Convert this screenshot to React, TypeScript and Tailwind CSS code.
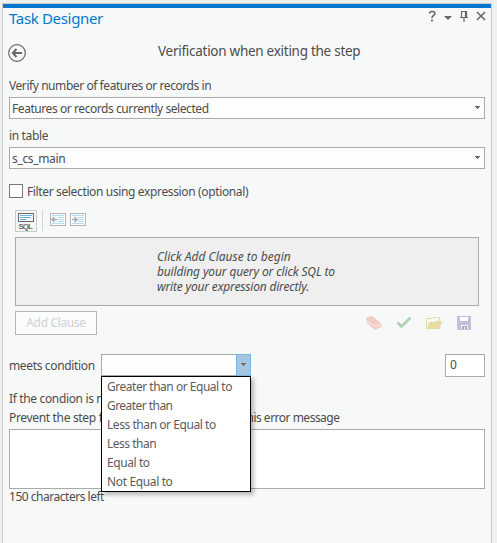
import type { ReactNode } from "react";

const conditions = [
  { label: "Greater than or Equal to", tracking: "tracking-[-0.48px]" },
  { label: "Greater than", tracking: "tracking-[-0.55px]" },
  { label: "Less than or Equal to", tracking: "tracking-[-0.44px]" },
  { label: "Less than", tracking: "tracking-[-0.48px]" },
  { label: "Equal to", tracking: "tracking-[-0.42px]" },
  { label: "Not Equal to", tracking: "tracking-[-0.36px]" },
];

function Caret() {
  return (
    <svg className="mb-[2px]" width="5" height="3" viewBox="0 0 5 3" shapeRendering="crispEdges">
      <path d="M0 0H5V1H4V2H3V3H2V2H1V1H0Z" fill="#6a6a6a" />
    </svg>
  );
}

function Select({ children }: { children: ReactNode }) {
  return (
    <div className="flex h-[22px] items-center justify-between border border-[#a9abab] bg-[#fdfdfd] pr-[4px] pl-[2px]">
      <span className="pt-px">{children}</span>
      <Caret />
    </div>
  );
}

function IndentIcon({ right = false }: { right?: boolean }) {
  return (
    <svg width="16" height="13" viewBox="0 0 16 13" shapeRendering="crispEdges">
      <rect x="0.5" y="0.5" width="15" height="12" fill="#fafcfc" stroke="#b3b3b3" />
      <path d="M2 2.5H14M8 4.5H14M8 6.5H14M8 8.5H14M2 10.5H14" stroke="#b5dcf5" />
      <path
        d={right ? "M2 6.5H7M4.5 4L7 6.5L4.5 9" : "M7 6.5H2M4.5 4L2 6.5L4.5 9"}
        stroke="#aaa"
        strokeWidth="1.5"
        fill="none"
        shapeRendering="auto"
      />
    </svg>
  );
}

export default function App() {
  return (
    <div className="h-[543px] w-[497px] overflow-hidden bg-[#f0f0f0] pt-[3px] pl-[2px] font-['Noto_Sans','Open_Sans',sans-serif] text-[12px] leading-[16px] whitespace-nowrap text-[#4c4c4c]">
      <div className="h-[540px] w-[490px] border-x border-t border-[#cdcfcf] bg-[#f7f9f8]">
        <div className="h-[4px] bg-[#0078d0]" />
        <header className="flex h-[22px] items-start justify-between pr-[5px] pl-[6px]">
          <h1 className="text-[15px] leading-[21px] tracking-[-0.33px] text-[#0078d0]">Task Designer</h1>
          <svg className="mt-[2px]" width="58" height="13" viewBox="0 0 58 13" fill="none" stroke="#666">
            <path d="M1.5 3.5C1.5 1 7 .5 7 3.5C7 5.5 4 5.5 4 8" strokeWidth="1.6" />
            <path d="M4 9.5V11.5" strokeWidth="1.8" />
            <path d="M16 6H24L20 10Z" fill="#666" stroke="none" />
            <path d="M33.5 7V1.5H38.5V7M37.5 1.5V7M32 7.5H40M36 7.5V12" strokeWidth="1.2" />
            <path d="M49 2L57 10M57 2L49 10" strokeWidth="1.6" />
          </svg>
        </header>

        <div className="flex h-[37px] items-start pt-[14px] pl-[5px]">
          <svg width="18" height="18" viewBox="0 0 18 18" fill="none" stroke="#666">
            <circle cx="9" cy="9" r="8.3" strokeWidth="1.2" />
            <path d="M14 9H5M8.5 5L4.8 9L8.5 13" strokeWidth="1.9" />
          </svg>
          <h2 className="-mt-px ml-[132px] text-[13.5px] leading-[16px] tracking-[-0.27px]">Verification when exiting the step</h2>
        </div>

        <main className="flex w-[482px] flex-col pl-[6px]">
          <label className="mt-[11px] h-[19px] tracking-[-0.43px]">Verify number of features or records in</label>
          <Select><span className="tracking-[-0.43px]">Features or records currently selected</span></Select>
          <label className="mt-[9px] h-[19px] tracking-[-0.35px]">in table</label>
          <Select><span className="tracking-[-0.35px]">s_cs_main</span></Select>

          <label className="mt-[14px] flex h-[16px] items-start">
            <span className="mt-px size-[14px] border border-[#777] bg-white" />
            <span className="mt-px ml-[4px] tracking-[-0.36px]">Filter selection using expression (optional)</span>
          </label>

          <section className="mt-[11px] ml-[6px] flex w-[464px] flex-col">
            <div className="flex h-[22px] items-start">
              <svg width="22" height="22" viewBox="0 0 22 22">
                <rect x="0.5" y="0.5" width="21" height="21" fill="#f5f7f7" stroke="#c9cbcb" />
                <rect x="3.5" y="3.5" width="15" height="8" fill="#fafafa" stroke="#666" />
                <path d="M5 5.5H17M5 7.5H16M5 9.5H11" stroke="#66b5ea" shapeRendering="crispEdges" />
                <text x="3.5" y="19" fontSize="8" fontWeight="bold" fontFamily="Liberation Sans" textLength="14.5" fill="#6a6a6a">SQL</text>
              </svg>
              <span className="ml-[5px] h-[21px] w-px bg-[#d2d4d4]" />
              <div className="mt-[3px] ml-[7px] flex gap-[4px]">
                <IndentIcon />
                <IndentIcon right />
              </div>
            </div>
            <div className="mt-[5px] h-[69px] border border-[#a9abab] bg-[#efefef] pt-[11px] pl-[141px] leading-[15px] italic">
              <p className="tracking-[0.01px]">Click Add Clause to begin</p>
              <p className="tracking-[-0.14px]">building your query or click SQL to</p>
              <p className="tracking-[-0.18px]">write your expression directly.</p>
            </div>
            <div className="mt-[5px] flex h-[24px] items-start justify-between pr-[8px]">
              <button className="h-[24px] w-[82px] border border-[#b4b6b6] bg-[#fbfcfc] tracking-[-0.35px] text-[#cfd1d1]">Add Clause</button>
              <div className="mt-[5px] flex items-start gap-[14px]">
                <svg width="16" height="14" viewBox="0 0 16 14">
                  <path d="M0 2.5L1.5 1L6 0L16 8V10.5L9 14L1 7Z" fill="#f1ccc4" />
                  <path d="M0.5 4.5L9 10.5L16 8" stroke="#f9efeb" fill="none" />
                </svg>
                <svg width="16" height="14" viewBox="0 0 16 14">
                  <path d="M1.5 6.5L5.5 10.5L14.5 1.5" stroke="#afd3b4" strokeWidth="2.8" fill="none" />
                </svg>
                <svg width="16" height="14" viewBox="0 0 16 14">
                  <path d="M0.5 13V2.5H6L7 1.5H13.5V6" stroke="#e8dca3" fill="none" />
                  <path d="M3 6H9L10 5H16L14 13H1Z" fill="#e8dca3" />
                </svg>
                <svg className="ml-[1px]" width="14" height="14" viewBox="0 0 14 14" shapeRendering="crispEdges">
                  <path d="M0 0H14V14H1L0 13Z" fill="#c5bddd" />
                  <path d="M3 1H11V5H3ZM4 9H11V13H4Z" fill="#fafafa" />
                  <path d="M5 10H10V13H8V11H7V13H5Z" fill="#aaa" />
                </svg>
              </div>
            </div>
          </section>

          <div className="mt-[19px] flex h-[23px] items-start justify-between">
            <div className="flex">
              <label className="w-[92px] pt-[4px] tracking-[-0.35px]">meets condition</label>
              <div className="relative flex h-[22px] w-[150px]">
                <div className="flex-1 border border-r-0 border-[#a9abab] bg-[#fdfdfd]" />
                <div className="flex w-[15px] items-center justify-center border border-[#7eb4df] bg-[#a5c6e0]"><Caret /></div>
                <ul className="absolute top-[22px] left-0 z-10 h-[116px] w-[150px] border border-black bg-white pl-[5px] text-[#5c5c5c] shadow-[3px_3px_4px_rgba(0,0,0,0.25)]">
                  {conditions.map((c) => (
                    <li key={c.label} className="h-[19px] leading-[19px]"><span className={c.tracking}>{c.label}</span></li>
                  ))}
                </ul>
              </div>
            </div>
            <div className="h-[23px] w-[40px] border border-[#a9abab] bg-white pt-[2px] pl-[4px]">0</div>
          </div>

          <p className="mt-[14px] h-[19px] tracking-[-0.35px]">If the condion is not met</p>
          <p className="h-[19px] tracking-[-0.33px]">
            Prevent the step <span className="tracking-[-0.22px]">from finishing and display t</span>
            <span className="tracking-[-0.5px]">his error message</span>
          </p>
          <div className="h-[60px] border border-[#a9abab] bg-white" />
          <p className="tracking-[-0.48px]">150 characters left</p>
        </main>
      </div>
    </div>
  );
}
